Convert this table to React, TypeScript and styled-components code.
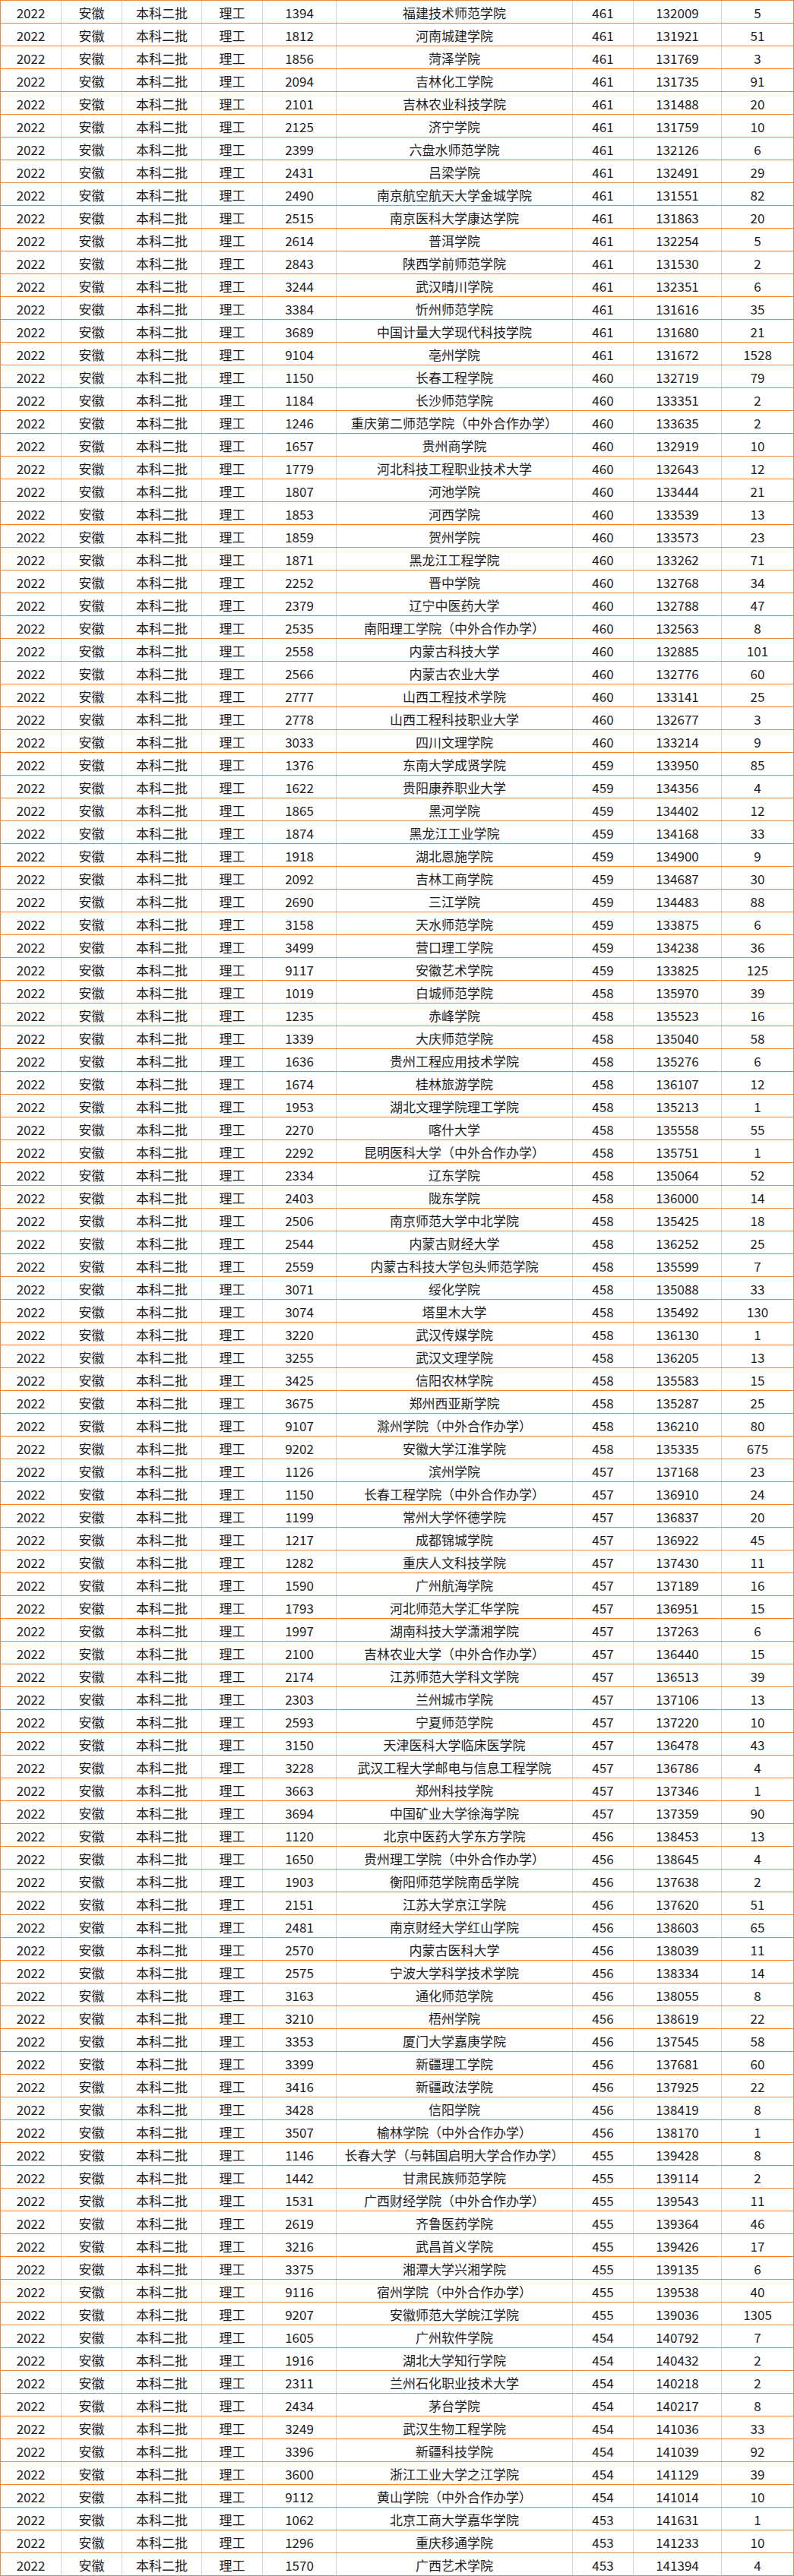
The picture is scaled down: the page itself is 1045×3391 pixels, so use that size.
import React from "react";
import styled, { createGlobalStyle } from "styled-components";

const colors = {
    rowLine: "#e8893d",
    colLine: "#d3d3df",
    text: "#1c1c1c",
    background: "#ffffff",
};

const GlobalStyle = createGlobalStyle`
    * {
        box-sizing: border-box;
    }

    body {
        margin: 0;
        background: ${colors.background};
        font-family: "Noto Sans CJK SC", "Noto Sans", sans-serif;
    }
`;

const columns = "80px 80px 105px 80px 97px 311px 80px 116px 96px";

const Table = styled.div`
    width: 1045px;
    border-top: 1px solid ${colors.rowLine};
`;

const Row = styled.div`
    display: grid;
    grid-template-columns: ${columns};
    height: 30px;
    border-bottom: 1px solid ${colors.rowLine};
`;

const Cell = styled.div<{ $edge?: "first" | "last" }>`
    display: flex;
    align-items: center;
    justify-content: center;
    padding-top: 2px;
    border-left: 1px solid
        ${(p) => (p.$edge === "first" ? colors.rowLine : colors.colLine)};
    border-right: ${(p) =>
        p.$edge === "last" ? `1px solid ${colors.rowLine}` : "none"};
    color: ${colors.text};
    font-size: 17px;
    line-height: 1;
    white-space: nowrap;
`;

type Entry = [string, string, number, number, number];

// 院校代号, 院校名称, 最低分, 最低位次, 录取人数
const entries: Entry[] = [
    ["1394", "福建技术师范学院", 461, 132009, 5],
    ["1812", "河南城建学院", 461, 131921, 51],
    ["1856", "菏泽学院", 461, 131769, 3],
    ["2094", "吉林化工学院", 461, 131735, 91],
    ["2101", "吉林农业科技学院", 461, 131488, 20],
    ["2125", "济宁学院", 461, 131759, 10],
    ["2399", "六盘水师范学院", 461, 132126, 6],
    ["2431", "吕梁学院", 461, 132491, 29],
    ["2490", "南京航空航天大学金城学院", 461, 131551, 82],
    ["2515", "南京医科大学康达学院", 461, 131863, 20],
    ["2614", "普洱学院", 461, 132254, 5],
    ["2843", "陕西学前师范学院", 461, 131530, 2],
    ["3244", "武汉晴川学院", 461, 132351, 6],
    ["3384", "忻州师范学院", 461, 131616, 35],
    ["3689", "中国计量大学现代科技学院", 461, 131680, 21],
    ["9104", "亳州学院", 461, 131672, 1528],
    ["1150", "长春工程学院", 460, 132719, 79],
    ["1184", "长沙师范学院", 460, 133351, 2],
    ["1246", "重庆第二师范学院（中外合作办学）", 460, 133635, 2],
    ["1657", "贵州商学院", 460, 132919, 10],
    ["1779", "河北科技工程职业技术大学", 460, 132643, 12],
    ["1807", "河池学院", 460, 133444, 21],
    ["1853", "河西学院", 460, 133539, 13],
    ["1859", "贺州学院", 460, 133573, 23],
    ["1871", "黑龙江工程学院", 460, 133262, 71],
    ["2252", "晋中学院", 460, 132768, 34],
    ["2379", "辽宁中医药大学", 460, 132788, 47],
    ["2535", "南阳理工学院（中外合作办学）", 460, 132563, 8],
    ["2558", "内蒙古科技大学", 460, 132885, 101],
    ["2566", "内蒙古农业大学", 460, 132776, 60],
    ["2777", "山西工程技术学院", 460, 133141, 25],
    ["2778", "山西工程科技职业大学", 460, 132677, 3],
    ["3033", "四川文理学院", 460, 133214, 9],
    ["1376", "东南大学成贤学院", 459, 133950, 85],
    ["1622", "贵阳康养职业大学", 459, 134356, 4],
    ["1865", "黑河学院", 459, 134402, 12],
    ["1874", "黑龙江工业学院", 459, 134168, 33],
    ["1918", "湖北恩施学院", 459, 134900, 9],
    ["2092", "吉林工商学院", 459, 134687, 30],
    ["2690", "三江学院", 459, 134483, 88],
    ["3158", "天水师范学院", 459, 133875, 6],
    ["3499", "营口理工学院", 459, 134238, 36],
    ["9117", "安徽艺术学院", 459, 133825, 125],
    ["1019", "白城师范学院", 458, 135970, 39],
    ["1235", "赤峰学院", 458, 135523, 16],
    ["1339", "大庆师范学院", 458, 135040, 58],
    ["1636", "贵州工程应用技术学院", 458, 135276, 6],
    ["1674", "桂林旅游学院", 458, 136107, 12],
    ["1953", "湖北文理学院理工学院", 458, 135213, 1],
    ["2270", "喀什大学", 458, 135558, 55],
    ["2292", "昆明医科大学（中外合作办学）", 458, 135751, 1],
    ["2334", "辽东学院", 458, 135064, 52],
    ["2403", "陇东学院", 458, 136000, 14],
    ["2506", "南京师范大学中北学院", 458, 135425, 18],
    ["2544", "内蒙古财经大学", 458, 136252, 25],
    ["2559", "内蒙古科技大学包头师范学院", 458, 135599, 7],
    ["3071", "绥化学院", 458, 135088, 33],
    ["3074", "塔里木大学", 458, 135492, 130],
    ["3220", "武汉传媒学院", 458, 136130, 1],
    ["3255", "武汉文理学院", 458, 136205, 13],
    ["3425", "信阳农林学院", 458, 135583, 15],
    ["3675", "郑州西亚斯学院", 458, 135287, 25],
    ["9107", "滁州学院（中外合作办学）", 458, 136210, 80],
    ["9202", "安徽大学江淮学院", 458, 135335, 675],
    ["1126", "滨州学院", 457, 137168, 23],
    ["1150", "长春工程学院（中外合作办学）", 457, 136910, 24],
    ["1199", "常州大学怀德学院", 457, 136837, 20],
    ["1217", "成都锦城学院", 457, 136922, 45],
    ["1282", "重庆人文科技学院", 457, 137430, 11],
    ["1590", "广州航海学院", 457, 137189, 16],
    ["1793", "河北师范大学汇华学院", 457, 136951, 15],
    ["1997", "湖南科技大学潇湘学院", 457, 137263, 6],
    ["2100", "吉林农业大学（中外合作办学）", 457, 136440, 15],
    ["2174", "江苏师范大学科文学院", 457, 136513, 39],
    ["2303", "兰州城市学院", 457, 137106, 13],
    ["2593", "宁夏师范学院", 457, 137220, 10],
    ["3150", "天津医科大学临床医学院", 457, 136478, 43],
    ["3228", "武汉工程大学邮电与信息工程学院", 457, 136786, 4],
    ["3663", "郑州科技学院", 457, 137346, 1],
    ["3694", "中国矿业大学徐海学院", 457, 137359, 90],
    ["1120", "北京中医药大学东方学院", 456, 138453, 13],
    ["1650", "贵州理工学院（中外合作办学）", 456, 138645, 4],
    ["1903", "衡阳师范学院南岳学院", 456, 137638, 2],
    ["2151", "江苏大学京江学院", 456, 137620, 51],
    ["2481", "南京财经大学红山学院", 456, 138603, 65],
    ["2570", "内蒙古医科大学", 456, 138039, 11],
    ["2575", "宁波大学科学技术学院", 456, 138334, 14],
    ["3163", "通化师范学院", 456, 138055, 8],
    ["3210", "梧州学院", 456, 138619, 22],
    ["3353", "厦门大学嘉庚学院", 456, 137545, 58],
    ["3399", "新疆理工学院", 456, 137681, 60],
    ["3416", "新疆政法学院", 456, 137925, 22],
    ["3428", "信阳学院", 456, 138419, 8],
    ["3507", "榆林学院（中外合作办学）", 456, 138170, 1],
    ["1146", "长春大学（与韩国启明大学合作办学）", 455, 139428, 8],
    ["1442", "甘肃民族师范学院", 455, 139114, 2],
    ["1531", "广西财经学院（中外合作办学）", 455, 139543, 11],
    ["2619", "齐鲁医药学院", 455, 139364, 46],
    ["3216", "武昌首义学院", 455, 139426, 17],
    ["3375", "湘潭大学兴湘学院", 455, 139135, 6],
    ["9116", "宿州学院（中外合作办学）", 455, 139538, 40],
    ["9207", "安徽师范大学皖江学院", 455, 139036, 1305],
    ["1605", "广州软件学院", 454, 140792, 7],
    ["1916", "湖北大学知行学院", 454, 140432, 2],
    ["2311", "兰州石化职业技术大学", 454, 140218, 2],
    ["2434", "茅台学院", 454, 140217, 8],
    ["3249", "武汉生物工程学院", 454, 141036, 33],
    ["3396", "新疆科技学院", 454, 141039, 92],
    ["3600", "浙江工业大学之江学院", 454, 141129, 39],
    ["9112", "黄山学院（中外合作办学）", 454, 141014, 10],
    ["1062", "北京工商大学嘉华学院", 453, 141631, 1],
    ["1296", "重庆移通学院", 453, 141233, 10],
    ["1570", "广西艺术学院", 453, 141394, 4],
];

const App = () => {
    return (
        <>
            <GlobalStyle />
            <Table>
                {entries.map(([code, name, score, rank, count], i) => (
                    <Row key={i}>
                        <Cell $edge="first">2022</Cell>
                        <Cell>安徽</Cell>
                        <Cell>本科二批</Cell>
                        <Cell>理工</Cell>
                        <Cell>{code}</Cell>
                        <Cell>{name}</Cell>
                        <Cell>{score}</Cell>
                        <Cell>{rank}</Cell>
                        <Cell $edge="last">{count}</Cell>
                    </Row>
                ))}
            </Table>
        </>
    );
};

export default App;
